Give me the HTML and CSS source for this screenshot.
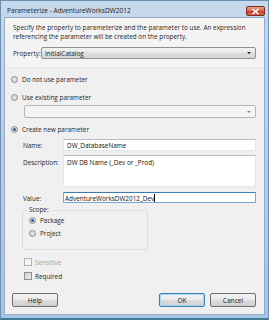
FILE: index.html
```html
<!DOCTYPE html>
<html lang="en">
<head>
  <meta charset="UTF-8">
  <title>Parameterize</title>
  <link rel="stylesheet" href="styles.css">
</head>
<body>
  <div class="window">
    <div class="titlebar">
      <span class="title">Parameterize - AdventureWorksDW2012</span>
      <span class="close">
        <svg width="9" height="7" viewBox="0 0 9 7"><path d="M1.5 1 L7.5 6 M7.5 1 L1.5 6" stroke="#fff" stroke-width="1.6"/></svg>
      </span>
    </div>

    <div class="client">
      <div class="top">
        <p class="intro">Specify the property to parameterize and the parameter to use. An expression referencing the parameter will be created on the property.</p>
        <div class="prop-row">
          <span class="prop-label">Property:</span>
          <div class="combo">
            <span>InitialCatalog</span>
            <span class="arrow"></span>
          </div>
        </div>
      </div>

      <div class="bottom">
        <label class="opt first"><span class="radio"></span>Do not use parameter</label>
        <label class="opt"><span class="radio"></span>Use existing parameter</label>
        <div class="combo disabled existing"><span></span><span class="arrow"></span></div>

        <label class="opt create"><span class="radio checked"></span>Create new parameter</label>

        <div class="field name-row">
          <span class="field-label">Name:</span>
          <div class="textbox">DW_DatabaseName</div>
        </div>
        <div class="field desc-row">
          <span class="field-label">Description:</span>
          <div class="textbox tall">DW DB Name (_Dev or _Prod)</div>
        </div>
        <div class="field value-row">
          <span class="field-label">Value:</span>
          <div class="textbox focus">AdventureWorksDW2012_Dev<span class="caret"></span></div>
        </div>

        <fieldset class="scope">
          <legend>Scope:</legend>
          <label class="opt small"><span class="radio checked"></span>Package</label>
          <label class="opt small"><span class="radio"></span>Project</label>
        </fieldset>

        <label class="check disabled-text"><span class="box"></span>Sensitive</label>
        <label class="check"><span class="box on"></span>Required</label>

        <div class="buttons">
          <button class="btn">Help</button>
          <span class="spacer"></span>
          <button class="btn default">OK</button>
          <button class="btn">Cancel</button>
        </div>
      </div>
    </div>
  </div>
</body>
</html>
```

FILE: styles.css
```css
* {
  box-sizing: border-box;
}

body {
  margin: 0;
  background: #fff;
  font-family: "Open Sans", "Noto Sans", sans-serif;
  font-size: 6.4px;
  color: #1e1e1e;
}

.window {
  width: 269px;
  height: 320px;
  background: linear-gradient(#c7d9ec, #b3cbe6 60%, #a8c4e3);
  border: 1px solid #6d8fb0;
  border-bottom: 2px solid #3f7c94;
  display: flex;
  flex-direction: column;
}

.titlebar {
  height: 16px;
  display: flex;
  align-items: center;
  padding: 0 3px 0 6px;
}

.title {
  flex: 1;
  font-size: 6.6px;
  color: #1b1b1b;
  padding-top: 3px;
}

.close {
  width: 19px;
  height: 10px;
  margin-top: 4px;
  border: 1px solid #7b2a1d;
  border-radius: 2px;
  background: linear-gradient(#e7a192, #d66a55 45%, #c24329 55%, #d2664a);
  display: flex;
  align-items: center;
  justify-content: center;
}

.client {
  flex: 1;
  margin: 0 3px 3px 3px;
  border: 1px solid #94adc6;
  background: #f0f0f0;
  display: flex;
  flex-direction: column;
}

.top {
  padding: 5px 8px 8px 8px;
  background: #f4f4f4;
  border-bottom: 1px solid #e6e6e6;
}

.intro {
  margin: 0;
  line-height: 9px;
}

.prop-row {
  display: flex;
  align-items: center;
  margin-top: 6px;
}

.prop-label {
  width: 28px;
}

.combo {
  flex: 1;
  height: 12px;
  border: 1px solid #8e8f8f;
  border-radius: 2px;
  background: linear-gradient(#f3f3f3, #e7e7e7 50%, #dcdcdc 51%, #d6d6d6);
  display: flex;
  align-items: center;
  padding: 0 4px 0 3px;
}

.combo span:first-child {
  flex: 1;
}

.arrow {
  width: 0;
  height: 0;
  border-left: 2px solid transparent;
  border-right: 2px solid transparent;
  border-top: 2px solid #222;
}

.combo.disabled {
  background: #f4f4f4;
  border-color: #b5b8bb;
}

.combo.disabled .arrow {
  border-top-color: #8a8a8a;
}

.bottom {
  flex: 1;
  display: flex;
  flex-direction: column;
  padding: 0 8px 0 6px;
}

.opt {
  display: flex;
  align-items: center;
  height: 12px;
  margin-top: 6px;
}

.opt.first {
  margin-top: 5px;
}

.opt.create {
  margin-top: 5px;
}

.radio {
  width: 7px;
  height: 7px;
  border-radius: 50%;
  border: 1px solid #8f8f8f;
  background: radial-gradient(circle, #e8e8e8, #cfcfcf);
  margin-right: 4px;
  display: flex;
  align-items: center;
  justify-content: center;
}

.radio.checked::after {
  content: "";
  width: 3px;
  height: 3px;
  border-radius: 50%;
  background: #2c5e8c;
}

.existing {
  flex: none;
  margin: 2px 0 0 13px;
  height: 13px;
}

.field {
  display: flex;
  margin-top: 4px;
  padding-left: 12px;
}

.field-label {
  width: 40px;
  padding-top: 2px;
}

.desc-row .field-label {
  padding-top: 3px;
}

.value-row {
  margin-top: 5px;
}

.textbox {
  flex: 1;
  height: 12px;
  border: 1px solid #e1e6ec;
  border-top-color: #b7bcc2;
  background: #fff;
  padding: 1px 3px;
  line-height: 9px;
  color: #111;
}

.textbox.tall {
  height: 32px;
  padding-top: 2px;
}

.textbox.focus {
  height: 11px;
  border-color: #7aa8d2;
  border-top-color: #3d7bb3;
  padding-left: 1px;
}

.caret {
  display: inline-block;
  width: 1px;
  height: 8px;
  background: #000;
  vertical-align: -1px;
}

.scope {
  margin: 3px 0 0 11px;
  width: 126px;
  height: 44px;
  border: 1px solid #d5dfe5;
  border-radius: 3px;
  padding: 0 6px;
}

.scope legend {
  padding: 0 1px;
  margin-left: -1px;
  line-height: 8px;
}

.opt.small {
  margin-top: 2px;
  height: 11px;
}

.opt.small:first-of-type {
  margin-top: 1px;
}

.check {
  display: flex;
  align-items: center;
  height: 12px;
  margin: 6px 0 0 13px;
}

.check + .check {
  margin-top: 2px;
}

.box {
  width: 8px;
  height: 8px;
  border: 1px solid #b2b5b8;
  background: #f6f6f6;
  margin-right: 3px;
}

.box.on {
  border-color: #8f8f8f;
  background: linear-gradient(135deg, #cdcdcd, #eeeeee);
}

.disabled-text {
  color: #a3a3a3;
}

.buttons {
  display: flex;
  margin-top: 11px;
  padding-left: 1px;
}

.spacer {
  flex: 1;
}

.btn {
  width: 46px;
  height: 14px;
  padding: 0;
  font-family: inherit;
  font-size: 6.6px;
  color: #1b1b1b;
  border: 1px solid #707070;
  border-radius: 2px;
  background: linear-gradient(#f2f2f2, #ebebeb 50%, #dddddd 51%, #cfcfcf);
}

.btn + .btn {
  margin-left: 5px;
}

.btn.default {
  border-color: #3c7fb1;
  box-shadow: inset 0 0 0 1px #a8d6f4;
}
```
